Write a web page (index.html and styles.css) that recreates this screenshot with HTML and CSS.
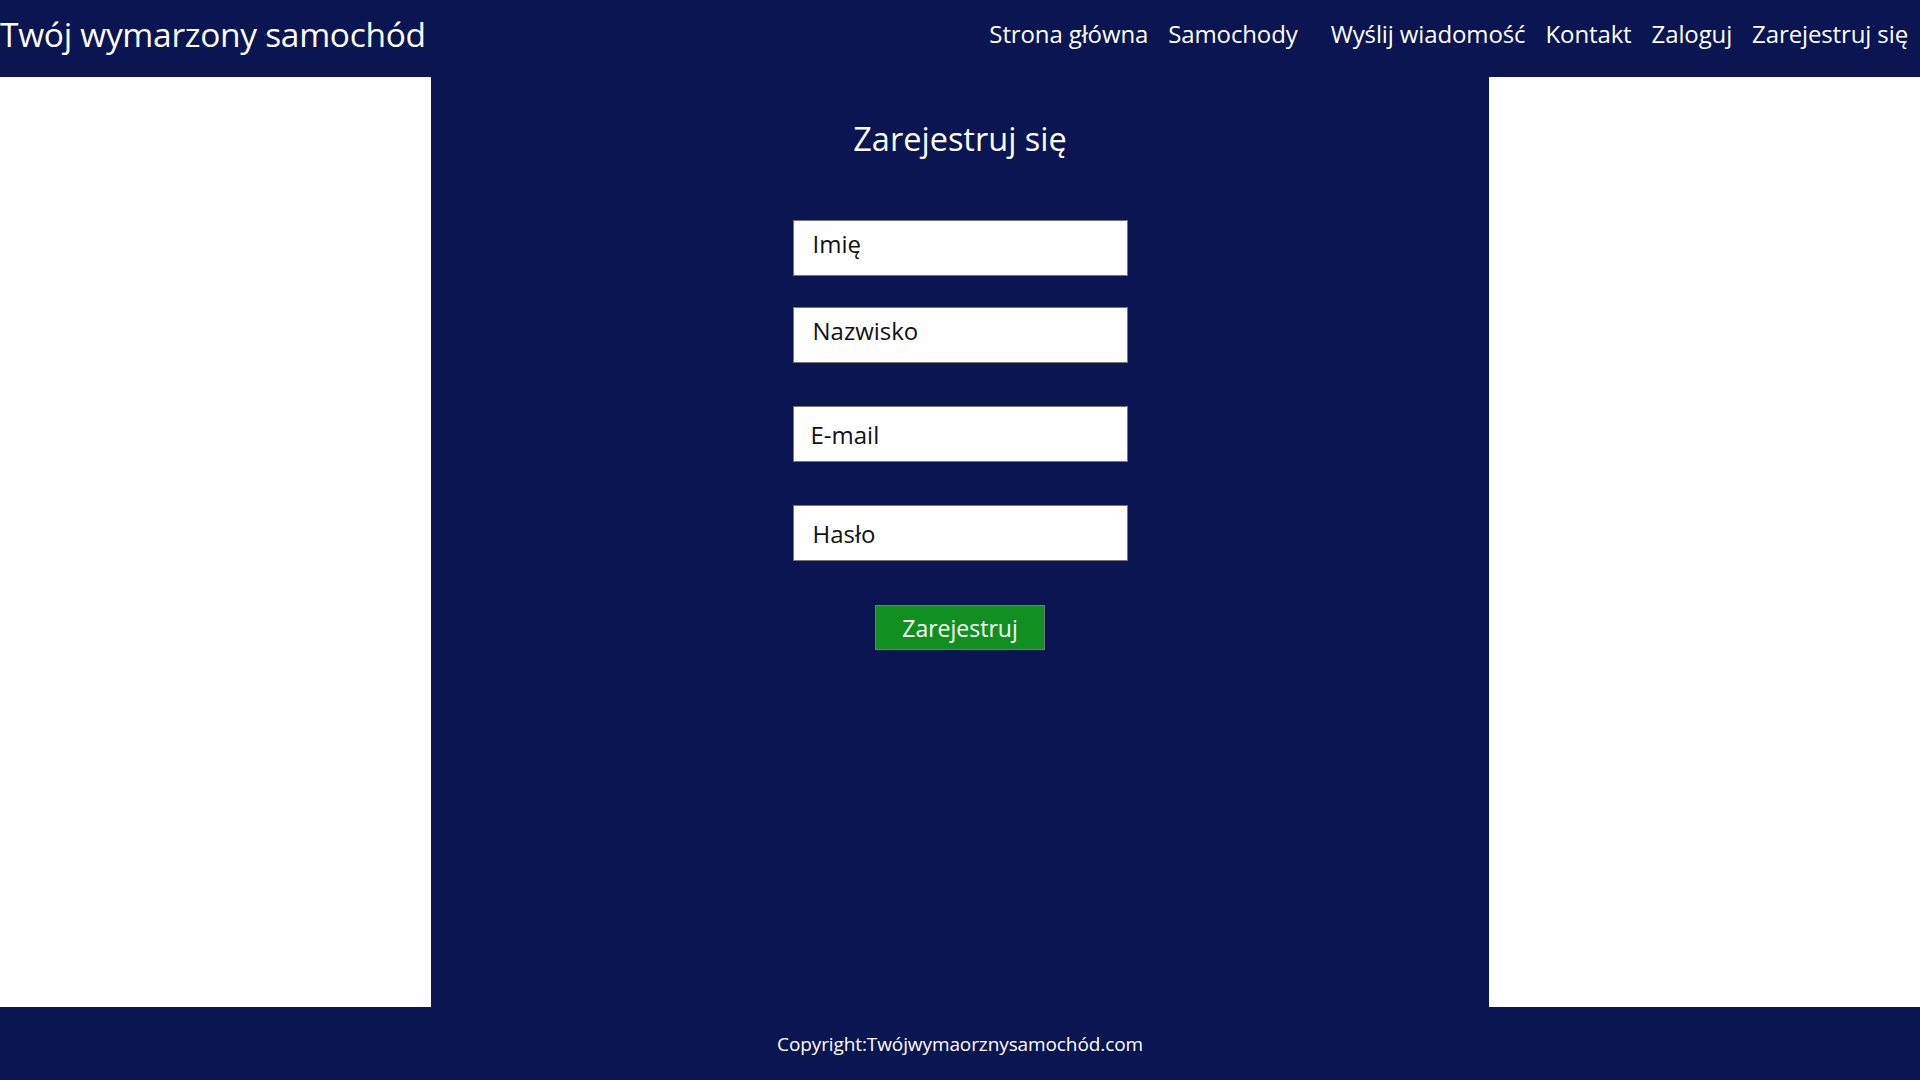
FILE: index.html
```html
<!DOCTYPE html>
<html lang="pl">
<head>
<meta charset="utf-8">
<title>Zarejestruj się</title>
<link rel="stylesheet" href="styles.css">
</head>
<body>
<header class="topbar">
  <div class="brand">Twój wymarzony samochód</div>
  <nav class="nav">
    <a href="#" class="nav-link">Strona główna</a>
    <a href="#" class="nav-link nav-link--wide">Samochody</a>
    <a href="#" class="nav-link">Wyślij wiadomość</a>
    <a href="#" class="nav-link">Kontakt</a>
    <a href="#" class="nav-link">Zaloguj</a>
    <a href="#" class="nav-link">Zarejestruj się</a>
  </nav>
</header>
<main class="layout">
  <aside class="side"></aside>
  <section class="content">
    <h2 class="title">Zarejestruj się</h2>
    <form class="form">
      <input class="field field--raised" type="text" placeholder="Imię">
      <input class="field field--raised field--gap-s" type="text" placeholder="Nazwisko">
      <input class="field field--gap-l field--email" type="email" placeholder="E-mail">
      <input class="field field--gap-l" type="password" placeholder="Hasło">
      <button class="submit" type="button">Zarejestruj</button>
    </form>
  </section>
  <aside class="side"></aside>
</main>
<footer class="footer">Copyright:Twójwymaorznysamochód.com</footer>
</body>
</html>
```

FILE: styles.css
```css
* { box-sizing: border-box; }
html, body { margin: 0; padding: 0; }
body {
  width: 1920px;
  height: 1080px;
  overflow: hidden;
  background: #0a1551;
  font-family: "Open Sans", "Noto Sans", sans-serif;
  color: #fff;
  display: flex;
  flex-direction: column;
}
.topbar {
  height: 77px;
  flex: none;
  display: flex;
  justify-content: space-between;
  align-items: flex-start;
  background: #0a1551;
}
.brand {
  font-size: 33.5px;
  line-height: 34px;
  margin-top: 17px;
  letter-spacing: -0.3px;
}
.nav {
  display: flex;
  gap: 20px;
  margin-top: 22px;
  padding-right: 12px;
}
.nav-link {
  color: #fff;
  text-decoration: none;
  font-size: 24px;
  line-height: 24px;
  letter-spacing: -0.12px;
}
.nav-link--wide { margin-right: 13px; }
.layout {
  flex: none;
  height: 930px;
  display: grid;
  grid-template-columns: 431px 1058px 431px;
}
.side { background: #fff; }
.content {
  background: #0a1551;
  display: flex;
  flex-direction: column;
  align-items: center;
}
.title {
  margin: 42px 0 0;
  font-size: 32.5px;
  line-height: 40px;
  font-weight: 400;
}
.form {
  margin-top: 61px;
  display: flex;
  flex-direction: column;
  align-items: center;
}
.field {
  width: 335px;
  height: 56px;
  margin: 0;
  border: 1px solid #767676;
  background: #fff;
  padding: 0 18px 0 19px;
  font-family: "Open Sans", "Noto Sans", sans-serif;
  font-size: 24px;
  color: #000;
  outline: none;
  border-radius: 0;
}
.field::placeholder { color: #111; opacity: 1; }
.field--raised { padding-bottom: 10px; }
.field--email { padding-left: 17px; }
.field--gap-s { margin-top: 31px; }
.field--gap-l { margin-top: 43px; }
.submit {
  margin-top: 44px;
  width: 170px;
  height: 45px;
  border: 1px solid #767676;
  background: #11901f;
  color: #fff;
  font-family: "Open Sans", "Noto Sans", sans-serif;
  font-size: 23px;
  padding: 0;
  border-radius: 0;
}
.footer {
  flex: 1;
  display: flex;
  align-items: center;
  justify-content: center;
  font-size: 19px;
  letter-spacing: -0.1px;
  background: #0a1551;
}
```
